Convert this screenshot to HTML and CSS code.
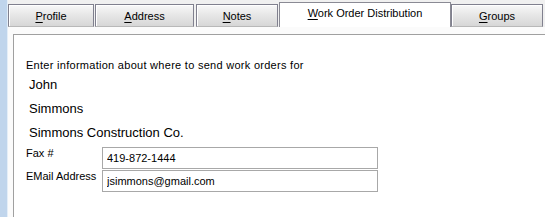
FILE: index.html
```html
<!DOCTYPE html>
<html lang="en">
  <head>
    <meta charset="UTF-8" />
    <title>Work Order Distribution</title>
    <link rel="stylesheet" href="styles.css">
  </head>
  <body>
    <div class="window">
      <div class="side"></div>
      <div class="main">
        <ul class="tabs">
          <li class="tab tab-profile"><u>P</u>rofile</li>
          <li class="tab tab-address"><u>A</u>ddress</li>
          <li class="tab tab-notes"><u>N</u>otes</li>
          <li class="tab tab-active"><u>W</u>ork Order Distribution</li>
          <li class="tab tab-groups"><u>G</u>roups</li>
        </ul>
        <div class="panel">
          <p class="intro">Enter information about where to send work orders for</p>
          <p class="name">John</p>
          <p class="name">Simmons</p>
          <p class="name">Simmons Construction Co.</p>
          <div class="field">
            <label for="fax">Fax #</label>
            <input type="text" id="fax" value="419-872-1444" />
          </div>
          <div class="field">
            <label for="email">EMail Address</label>
            <input type="text" id="email" value="jsimmons@gmail.com" />
          </div>
        </div>
      </div>
    </div>
  </body>
</html>
```

FILE: styles.css
```css
body {
  margin: 0;
  padding: 0;
  font-family: "Liberation Sans", Arial, sans-serif;
  font-size: 11px;
  color: #000;
  background-color: #fff;
}

.window {
  display: flex;
  width: 545px;
  height: 217px;
  overflow: hidden;
}

.side {
  width: 7px;
  background-color: #c0d5ec;
  border-right: 1px solid #e4eef8;
}

.main {
  flex: 1;
  display: flex;
  flex-direction: column;
  background: linear-gradient(#f0f0f0 0, #f0f0f0 27px, #fbfbfb 27px);
}

.tabs {
  list-style: none;
  margin: 0 0 7px 0;
  padding: 0;
  display: flex;
  align-items: flex-start;
  height: 27px;
}

.tab {
  box-sizing: border-box;
  margin-top: 4px;
  height: 23px;
  padding-top: 5px;
  text-align: center;
  border: 1px solid #80808e;
  border-bottom-color: #b8b8b8;
  background: linear-gradient(#f8f8f8, #e6e6e6 50%, #d6d6d6);
  box-shadow: inset 1px 1px 0 #fff;
}

.tab u {
  text-decoration-thickness: 1px;
  text-underline-offset: 2px;
}

.tab-profile {
  width: 86px;
}

.tab-address {
  width: 99px;
  margin-left: 1px;
}

.tab-notes {
  width: 82px;
  margin-left: 2px;
}

.tab-active {
  width: 172px;
  margin-left: 1px;
  margin-top: 2px;
  height: 25px;
  padding-top: 4px;
  background: #fff;
  border-color: #8a8a94;
  border-bottom: none;
  box-shadow: none;
}

.tab-groups {
  width: 92px;
}

.panel {
  flex: 1;
  margin-left: 5px;
  border-top: 1px solid #a0a0a0;
  border-left: 1px solid #a0a0a0;
  background-color: #fff;
  padding: 24px 0 0 12px;
}

.intro {
  margin: 0 0 1px 0;
  line-height: 13px;
  letter-spacing: 0.28px;
}

.name {
  margin: 0;
  padding-left: 3px;
  font-size: 13px;
  line-height: 24px;
}

.field {
  display: flex;
  align-items: flex-start;
  margin-top: 2px;
}

.field + .field {
  margin-top: 1px;
}

.field label {
  width: 76px;
  line-height: 13px;
}

.field input {
  box-sizing: border-box;
  width: 276px;
  height: 22px;
  margin: 0;
  padding: 0 4px;
  border: 1px solid #a8a8a8;
  font-family: "Liberation Sans", Arial, sans-serif;
  font-size: 11px;
  color: #000;
  outline: none;
}
```
